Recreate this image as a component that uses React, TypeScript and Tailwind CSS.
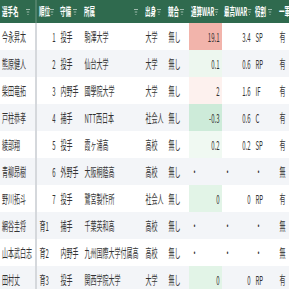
const cols = 'grid grid-cols-[74px_42px_48px_122px_46px_46px_66px_62px_48px_46px]';

type Row = {
  name: string;
  rank: string;
  pos: string;
  team: string;
  kind: string;
  rival: string;
  war: string;
  warBg: string;
  best: string;
  role: string;
  first: string;
};

const rows: Row[] = [
  { name: '今永昇太', rank: '1', pos: '投手', team: '駒澤大学', kind: '大学', rival: '無し', war: '19.1', warBg: 'bg-[#f2b4ab]', best: '3.4', role: 'SP', first: '有' },
  { name: '熊原健人', rank: '2', pos: '投手', team: '仙台大学', kind: '大学', rival: '無し', war: '0.1', warBg: 'bg-[#edf7ef]', best: '0.6', role: 'RP', first: '有' },
  { name: '柴田竜拓', rank: '3', pos: '内野手', team: '國學院大学', kind: '大学', rival: '無し', war: '2', warBg: 'bg-[#fdf1ee]', best: '1.6', role: 'IF', first: '有' },
  { name: '戸柱恭孝', rank: '4', pos: '捕手', team: 'NTT西日本', kind: '社会人', rival: '無し', war: '-0.3', warBg: 'bg-[#cdebd9]', best: '0.6', role: 'C', first: '有' },
  { name: '綾部翔', rank: '5', pos: '投手', team: '霞ヶ浦高', kind: '高校', rival: '無し', war: '0.2', warBg: 'bg-[#f0f9f2]', best: '0.2', role: 'SP', first: '有' },
  { name: '青柳昂樹', rank: '6', pos: '外野手', team: '大阪桐蔭高', kind: '高校', rival: '無し', war: '', warBg: '', best: '', role: '', first: '無' },
  { name: '野川拓斗', rank: '7', pos: '投手', team: '鷺宮製作所', kind: '社会人', rival: '無し', war: '0', warBg: 'bg-[#e2f4e7]', best: '0', role: 'RP', first: '有' },
  { name: '網谷圭将', rank: '育1', pos: '捕手', team: '千葉英和高', kind: '高校', rival: '無し', war: '', warBg: '', best: '', role: '', first: '無' },
  { name: '山本武白志', rank: '育2', pos: '内野手', team: '九州国際大学付属高', kind: '高校', rival: '無し', war: '', warBg: '', best: '', role: '', first: '無' },
  { name: '田村丈', rank: '育3', pos: '投手', team: '関西学院大学', kind: '大学', rival: '無し', war: '0', warBg: 'bg-[#e2f4e7]', best: '0', role: 'RP', first: '有' },
];

const headers = ['選手名', '順位', '守備', '所属', '出身', '競合', '通算WAR', '最高WAR', '役割', '一軍'];

function FilterIcon() {
  return (
    <svg width="8" height="6" viewBox="0 0 8 6" className="shrink-0">
      <rect x="0" y="0" width="8" height="1" fill="rgba(255,255,255,0.55)" />
      <rect x="1.5" y="2.5" width="5" height="1" fill="rgba(255,255,255,0.55)" />
      <rect x="3" y="5" width="2" height="1" fill="rgba(255,255,255,0.55)" />
    </svg>
  );
}

function Cell({ children, right, className = '' }: { children?: React.ReactNode; right?: boolean; className?: string }) {
  return (
    <div className={`flex items-center px-[5px] whitespace-nowrap overflow-hidden ${right ? 'justify-end' : ''} ${className}`}>
      {children}
    </div>
  );
}

function Dot() {
  return <span>・</span>;
}

export default function App() {
  return (
    <div className="w-[289px] h-[289px] overflow-hidden bg-white">
      <div
        className="w-[600px] origin-top-left scale-x-50 text-[#333] text-[12px] leading-none"
        style={{ fontFamily: '"Noto Sans CJK JP", "Noto Sans", sans-serif' }}
      >
        <div className={`${cols} h-[23px] bg-[#2f6a4e] text-white text-[11px] font-bold`}>
          {headers.map((h, i) => (
            <div
              key={h}
              className={`flex items-center justify-between pl-[4px] pr-[10px] whitespace-nowrap ${i === 0 ? 'border-r-[4px] border-[#4f8068]' : ''}`}
            >
              <span>{h}</span>
              <FilterIcon />
            </div>
          ))}
        </div>

        {rows.map((r, i) => {
          const rowBg = i % 2 === 1 ? 'bg-[#f3f5f8]' : 'bg-white';
          const isNum = /^\d+$/.test(r.rank);
          return (
            <div key={r.name} className={`${cols} h-[27px] ${rowBg}`}>
              <Cell className="pl-[4px] border-r-[4px] border-[#d5d8dc]">{r.name}</Cell>
              <Cell right={isNum}>{r.rank}</Cell>
              <Cell>{r.pos}</Cell>
              <Cell>{r.team}</Cell>
              <Cell>{r.kind}</Cell>
              <Cell>{r.rival}</Cell>
              <Cell right={r.war !== ''} className={r.warBg}>
                {r.war === '' ? <Dot /> : r.war}
              </Cell>
              <Cell right={r.best !== ''}>{r.best === '' ? <Dot /> : r.best}</Cell>
              <Cell>{r.role === '' ? <Dot /> : r.role}</Cell>
              <Cell>{r.first}</Cell>
            </div>
          );
        })}
      </div>
    </div>
  );
}
